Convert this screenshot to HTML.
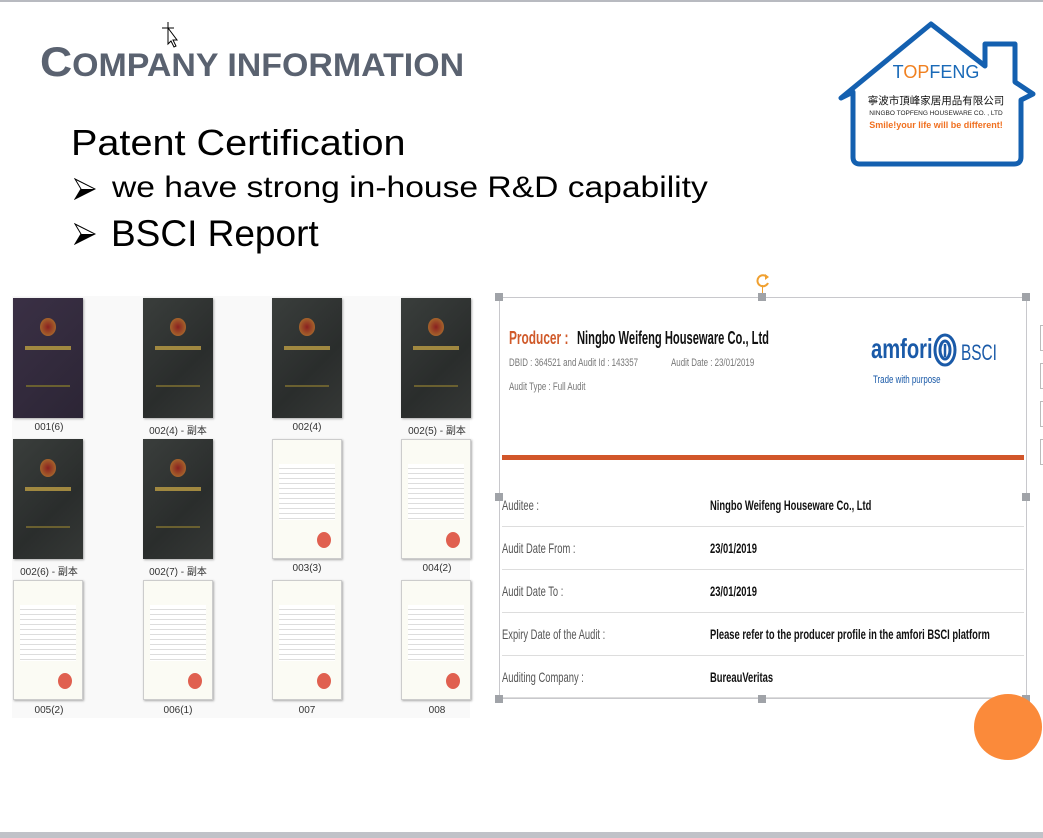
<!DOCTYPE html>
<html><head><meta charset="utf-8"><style>
*{margin:0;padding:0;box-sizing:border-box}
body{width:1043px;height:838px;background:#fff;position:relative;overflow:hidden;font-family:"Liberation Sans",sans-serif}
.a{position:absolute}
.n{display:inline-block;transform:scaleX(.8);transform-origin:left center;white-space:nowrap}
.cv{position:absolute;width:70px;height:120px;box-shadow:1px 1px 2px #aaa;background:linear-gradient(135deg,#3a3e3c,#2a2d2c 60%,#353836)}
.cv:before{content:"";position:absolute;left:27px;top:20px;width:16px;height:18px;border-radius:50%;background:radial-gradient(#8a2020,#b08030)}
.cv:after{content:"";position:absolute;left:12px;top:48px;width:46px;height:4px;background:#a08840;box-shadow:0 38px 0 -1px #6a6030}
.pp{position:absolute;width:70px;height:120px;background:#fbfbf4;border:1px solid #ccc;box-shadow:1px 1px 2px #aaa}
.pp:before{content:"";position:absolute;left:6px;top:24px;width:56px;height:56px;background:repeating-linear-gradient(#fff 0 4px,#ddd 4px 5px)}
.pp:after{content:"";position:absolute;right:10px;bottom:10px;width:14px;height:16px;border-radius:50%;background:#e06050}
.lb{position:absolute;width:90px;text-align:center;font-size:10px;color:#333}
.row{position:absolute;left:502px;width:522px;height:1px;background:#ddd}
.k{position:absolute;left:502px;font-size:14px;color:#555}
.v{position:absolute;left:710px;font-size:14px;color:#111;font-weight:bold}
.k .n,.v .n{transform:scaleX(.67)}
.h{position:absolute;width:8px;height:8px;background:#a0a3a8}
.ar{position:absolute;width:22px;height:22px}
</style></head><body>
<div class="a" style="left:0;top:0;width:1043px;height:2px;background:#b8bac0"></div>
<div class="a" style="left:0;top:832px;width:1043px;height:6px;background:#c0c2c8"></div>
<div class="a" style="left:40px;top:38px;color:#5a6270;font-weight:bold;white-space:nowrap"><span class="n" style="transform:scaleX(1.06)"><span style="font-size:42px">C</span><span style="font-size:32px">OMPANY INFORMATION</span></span></div>
<div class="a" style="left:71px;top:122px;font-size:36px;color:#000"><span class="n" style="transform:scaleX(1.1)">Patent Certification</span></div>
<svg class="ar" style="left:74px;top:178px" viewBox="0 0 22 22"><path d="M1 1 L21 11 L1 21 L7 11Z" fill="#fff" stroke="#000" stroke-width="1"/><path d="M1 21 L21 11 L7 11Z" fill="#000"/></svg>
<div class="a" style="left:112px;top:171px;font-size:30px;color:#000"><span class="n" style="transform:scaleX(1.12)">we have strong in-house R&amp;D capability</span></div>
<svg class="ar" style="left:74px;top:223px" viewBox="0 0 22 22"><path d="M1 1 L21 11 L1 21 L7 11Z" fill="#fff" stroke="#000" stroke-width="1"/><path d="M1 21 L21 11 L7 11Z" fill="#000"/></svg>
<div class="a" style="left:111px;top:213px;font-size:37px;color:#000">BSCI Report</div>

<svg class="a" style="left:835px;top:20px" width="202" height="190" viewBox="0 0 202 190">
<path d="M18 137 V72 L6 78 L96 4 L150 46 V24 H180 V62 L198 74 L186 80 V137 Q186 144 179 144 H25 Q18 144 18 137Z" fill="#fff" stroke="#1460b0" stroke-width="5" stroke-linejoin="round"/>
<text x="101" y="58" text-anchor="middle" font-size="18" fill="#1a6ab8" font-family="Liberation Sans">T<tspan fill="#f08020">OP</tspan>FENG</text>
<text x="101" y="84" text-anchor="middle" font-size="10.5" fill="#111" font-family="Noto Sans CJK SC,sans-serif">寧波市頂峰家居用品有限公司</text>
<text x="101" y="95" text-anchor="middle" font-size="6.5" fill="#222">NINGBO TOPFENG HOUSEWARE CO. , LTD</text>
<text x="101" y="108" text-anchor="middle" font-size="9" font-weight="bold" fill="#f07020">Smile!your life will be different!</text>
</svg>

<div class="a" style="left:12px;top:296px;width:458px;height:422px;background:#f9f9f9"></div>
<div class="cv" style="left:13px;top:298px;background:linear-gradient(135deg,#3a3045,#2c2535)"></div>
<div class="cv" style="left:143px;top:298px"></div>
<div class="cv" style="left:272px;top:298px"></div>
<div class="cv" style="left:401px;top:298px"></div>
<div class="cv" style="left:13px;top:439px"></div>
<div class="cv" style="left:143px;top:439px"></div>
<div class="pp" style="left:272px;top:439px"></div>
<div class="pp" style="left:401px;top:439px"></div>
<div class="pp" style="left:13px;top:580px"></div>
<div class="pp" style="left:143px;top:580px"></div>
<div class="pp" style="left:272px;top:580px"></div>
<div class="pp" style="left:401px;top:580px"></div>
<div class="lb" style="left:4px;top:422px">001(6)</div>
<div class="lb" style="left:133px;top:422px">002(4) - 副本</div>
<div class="lb" style="left:262px;top:422px">002(4)</div>
<div class="lb" style="left:392px;top:422px">002(5) - 副本</div>
<div class="lb" style="left:4px;top:563px">002(6) - 副本</div>
<div class="lb" style="left:133px;top:563px">002(7) - 副本</div>
<div class="lb" style="left:262px;top:563px">003(3)</div>
<div class="lb" style="left:392px;top:563px">004(2)</div>
<div class="lb" style="left:4px;top:705px">005(2)</div>
<div class="lb" style="left:133px;top:705px">006(1)</div>
<div class="lb" style="left:262px;top:705px">007</div>
<div class="lb" style="left:392px;top:705px">008</div>

<div class="a" style="left:499px;top:297px;width:528px;height:402px;border:1px solid #c8c8cc"></div>
<div class="a" style="left:509px;top:328px;font-size:18px;font-weight:bold;color:#d05a2a"><span class="n" style="transform:scaleX(.66)">Producer :</span></div>
<div class="a" style="left:577px;top:328px;font-size:18px;font-weight:bold;color:#111"><span class="n" style="transform:scaleX(.62)">Ningbo Weifeng Houseware Co., Ltd</span></div>
<div class="a" style="left:509px;top:357px;font-size:11px;color:#777"><span class="n" style="transform:scaleX(.72)">DBID : 364521 and Audit Id : 143357&nbsp;&nbsp;&nbsp;&nbsp;&nbsp;&nbsp;&nbsp;&nbsp;&nbsp;&nbsp;&nbsp;&nbsp;&nbsp;&nbsp;&nbsp;Audit Date : 23/01/2019</span></div>
<div class="a" style="left:509px;top:381px;font-size:11px;color:#777"><span class="n" style="transform:scaleX(.72)">Audit Type : Full Audit</span></div>
<div class="a" style="left:871px;top:333px;font-size:28px;font-weight:bold;color:#1a5aa8"><span class="n" style="transform:scaleX(.72)">amfori</span></div>
<svg class="a" style="left:933px;top:332px" width="24" height="36"><ellipse cx="12" cy="18" rx="10" ry="15" fill="none" stroke="#1a5aa8" stroke-width="3"/><ellipse cx="12" cy="18" rx="5" ry="9" fill="none" stroke="#1a5aa8" stroke-width="3"/><line x1="12" y1="12" x2="12" y2="25" stroke="#1a5aa8" stroke-width="2.5"/></svg>
<div class="a" style="left:961px;top:340px;font-size:22px;color:#1a5aa8"><span class="n" style="transform:scaleX(.7)">BSCI</span></div>
<div class="a" style="left:873px;top:374px;font-size:11px;color:#1a5aa8"><span class="n" style="transform:scaleX(.72)">Trade with purpose</span></div>
<div class="a" style="left:502px;top:455px;width:522px;height:5px;background:#d2562a"></div>
<div class="row" style="top:526px"></div><div class="row" style="top:569px"></div><div class="row" style="top:612px"></div><div class="row" style="top:655px"></div><div class="row" style="top:697px"></div>
<div class="k" style="top:497px"><span class="n">Auditee :</span></div><div class="v" style="top:497px"><span class="n">Ningbo Weifeng Houseware Co., Ltd</span></div>
<div class="k" style="top:540px"><span class="n">Audit Date From :</span></div><div class="v" style="top:540px"><span class="n">23/01/2019</span></div>
<div class="k" style="top:583px"><span class="n">Audit Date To :</span></div><div class="v" style="top:583px"><span class="n">23/01/2019</span></div>
<div class="k" style="top:626px"><span class="n">Expiry Date of the Audit :</span></div><div class="v" style="top:626px"><span class="n">Please refer to the producer profile in the amfori BSCI platform</span></div>
<div class="k" style="top:669px"><span class="n">Auditing Company :</span></div><div class="v" style="top:669px"><span class="n">BureauVeritas</span></div>
<div class="h" style="left:495px;top:293px"></div><div class="h" style="left:758px;top:293px"></div><div class="h" style="left:1022px;top:293px"></div>
<div class="h" style="left:495px;top:493px"></div><div class="h" style="left:1022px;top:493px"></div>
<div class="h" style="left:495px;top:695px"></div><div class="h" style="left:758px;top:695px"></div><div class="h" style="left:1022px;top:695px"></div>
<svg class="a" style="left:754px;top:272px" width="18" height="22"><path d="M13 5 A5.5 5.5 0 1 0 14 11" fill="none" stroke="#f0a030" stroke-width="2"/><path d="M11 2 L15 5 L11 8Z" fill="#f0a030"/><line x1="8.5" y1="13" x2="8.5" y2="21" stroke="#f0a030" stroke-width="1"/></svg>
<div class="a" style="left:1040px;top:325px;width:6px;height:26px;border:1px solid #bbb"></div>
<div class="a" style="left:1040px;top:363px;width:6px;height:26px;border:1px solid #bbb"></div>
<div class="a" style="left:1040px;top:401px;width:6px;height:26px;border:1px solid #bbb"></div>
<div class="a" style="left:1040px;top:439px;width:6px;height:26px;border:1px solid #bbb"></div>
<div class="a" style="left:974px;top:694px;width:68px;height:66px;border-radius:50%;background:#fb8a3a"></div>
<svg class="a" style="left:160px;top:20px" width="20" height="28"><path d="M8 2 V14 M2 8 H14" stroke="#000" stroke-width="1"/><path d="M8 8 L8 24 L11 21 L14 27 L16 26 L13 20 L17 20Z" fill="#fff" stroke="#000" stroke-width="1"/></svg>
</body></html>
